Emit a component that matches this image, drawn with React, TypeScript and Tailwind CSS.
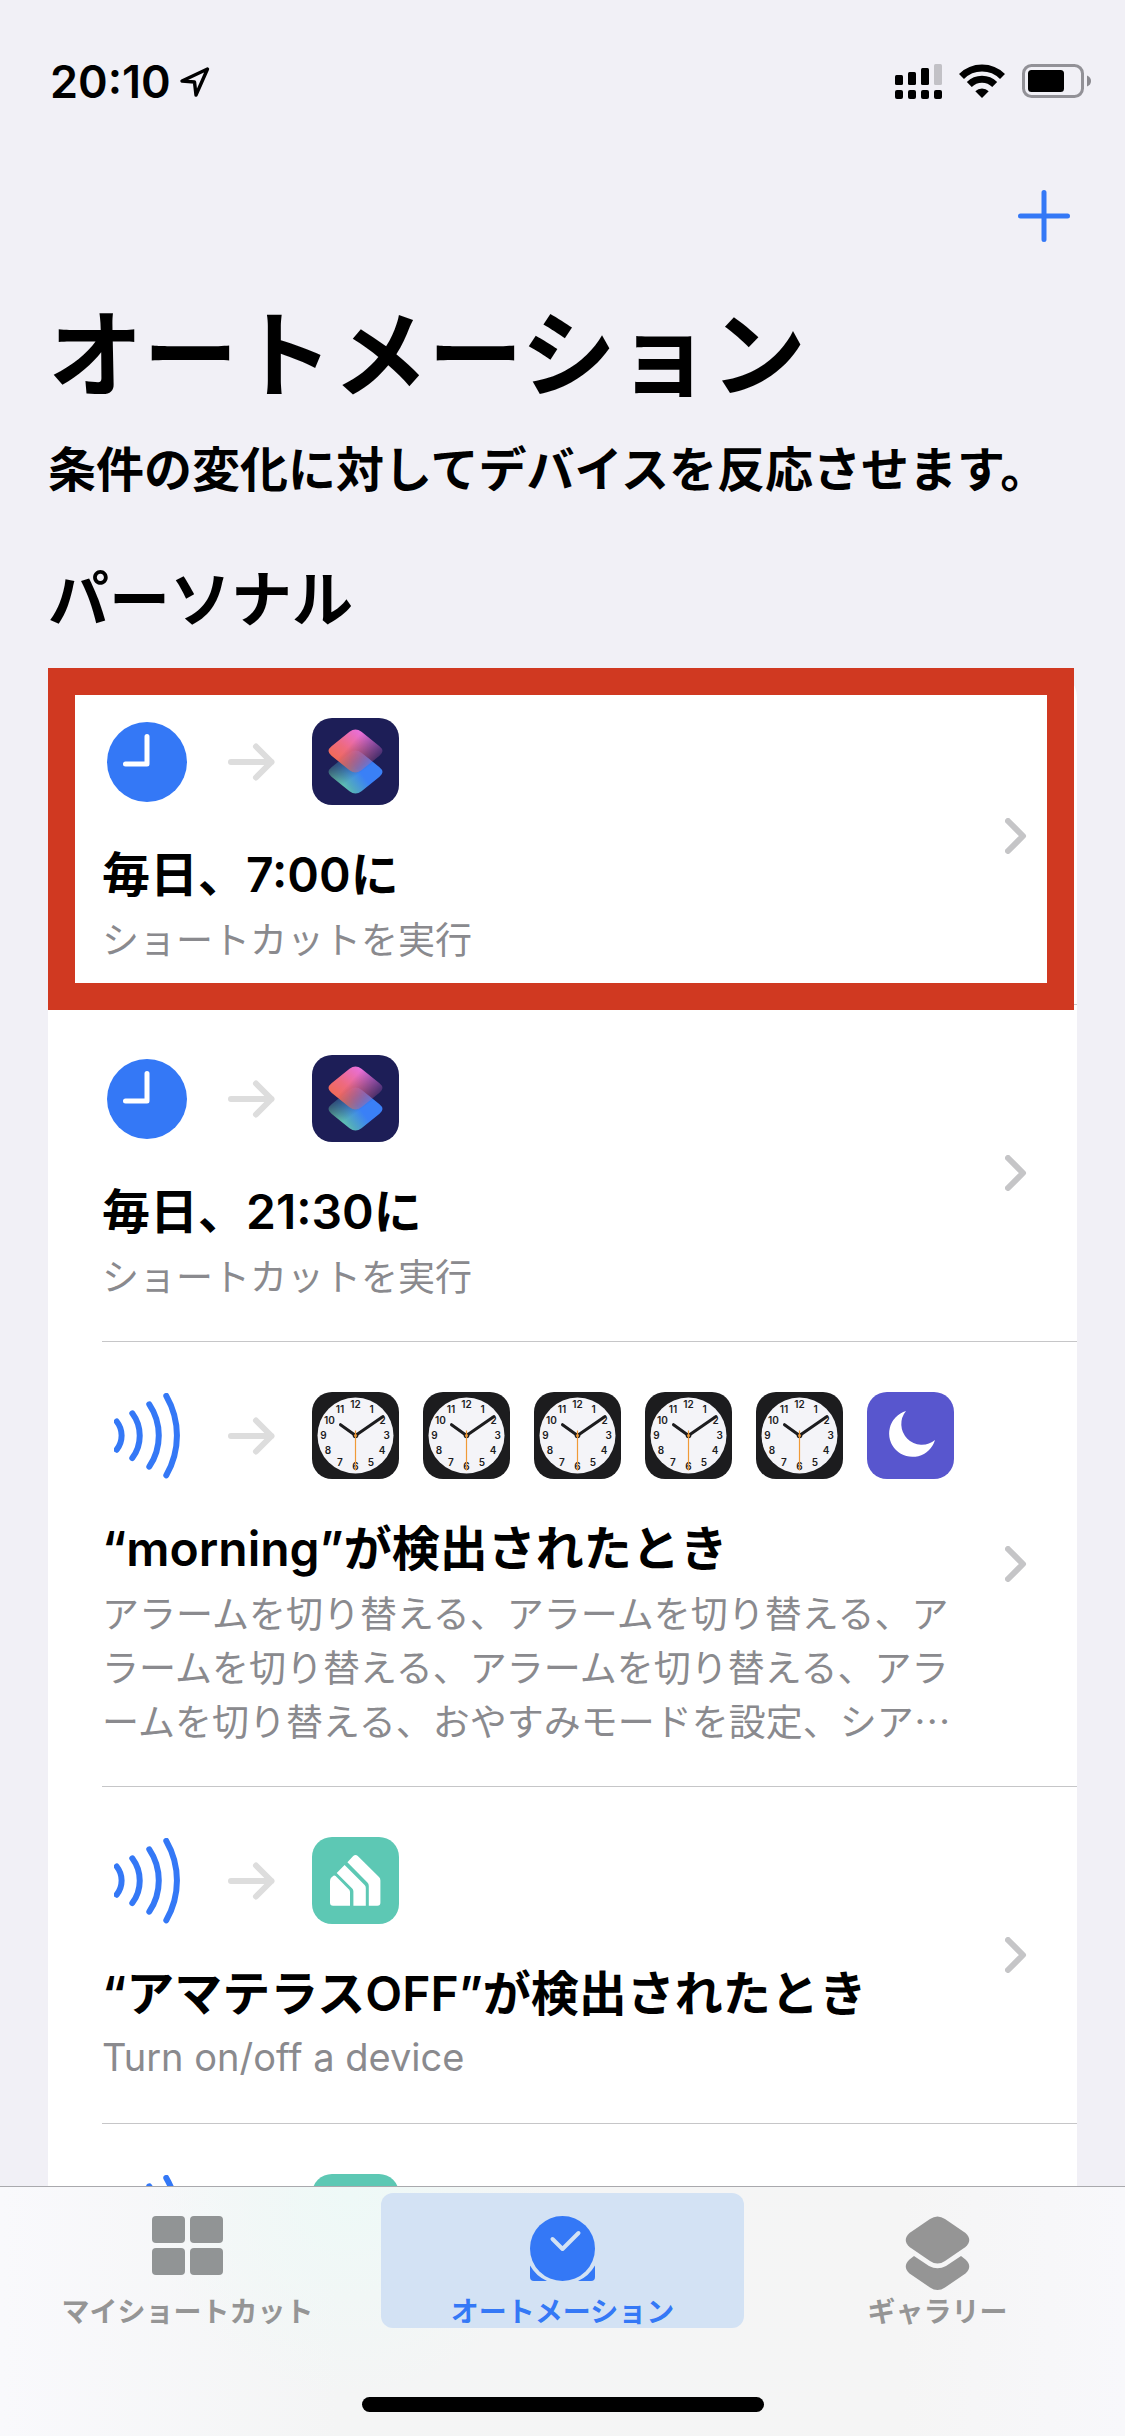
import type { ReactNode } from "react";

type Automation = {
  trigger: "time" | "nfc";
  actions: ActionName[];
  title?: string;
  detail?: string;
  detailLang?: "en";
  highlighted?: boolean;
};

type ActionName = "shortcuts" | "clock" | "moon" | "home";

const automations: Automation[] = [
  {
    trigger: "time",
    actions: ["shortcuts"],
    title: "毎日、7:00に",
    detail: "ショートカットを実行",
    highlighted: true,
  },
  {
    trigger: "time",
    actions: ["shortcuts"],
    title: "毎日、21:30に",
    detail: "ショートカットを実行",
  },
  {
    trigger: "nfc",
    actions: ["clock", "clock", "clock", "clock", "clock", "moon"],
    title: "“morning”が検出されたとき",
    detail:
      "アラームを切り替える、アラームを切り替える、アラームを切り替える、アラームを切り替える、アラームを切り替える、おやすみモードを設定、シア…",
  },
  {
    trigger: "nfc",
    actions: ["home"],
    title: "“アマテラスOFF”が検出されたとき",
    detail: "Turn on/off a device",
    detailLang: "en",
  },
  { trigger: "nfc", actions: ["home"] },
];

function LocationIcon() {
  return (
    <svg width="32" height="32" viewBox="0 0 32 32" fill="none" stroke="black" strokeWidth="3.4" strokeLinejoin="round">
      <path d="M28.5 3 L3 15 L15.5 16 L17 29 Z" />
    </svg>
  );
}

function SignalIcon() {
  return (
    <svg width="47" height="36" viewBox="0 0 47 36">
      <rect x="0" y="11" width="8" height="10" rx="1.5" />
      <rect x="13" y="8" width="8" height="13" rx="1.5" />
      <rect x="26" y="4" width="8" height="17" rx="1.5" />
      <rect x="39" y="0" width="8" height="21" rx="1.5" fill="#c2c1c6" />
      {[0, 13, 26, 39].map((x) => (
        <rect key={x} x={x} y="26" width="8" height="9" rx="2" />
      ))}
    </svg>
  );
}

function WifiIcon() {
  return (
    <svg width="46" height="36" viewBox="0 0 46 36" fill="none" stroke="black" strokeWidth="7">
      <path d="M2.5 12.5 A29 29 0 0 1 43.5 12.5" />
      <path d="M10.3 20.5 A18 18 0 0 1 35.7 20.5" />
      <path d="M23 34 L16.3 27.2 A9.5 9.5 0 0 1 29.7 27.2 Z" fill="black" stroke="none" />
    </svg>
  );
}

function BatteryIcon() {
  return (
    <svg width="70" height="36" viewBox="0 0 70 36">
      <rect x="1.5" y="1.5" width="59" height="31" rx="8" fill="none" stroke="#929197" strokeWidth="3" />
      <rect x="6" y="6" width="36" height="22" rx="3.5" />
      <path d="M65 11.5 Q69 13 69 17 Q69 21 65 22.5 Z" fill="#8a898f" />
    </svg>
  );
}

function TimeIcon() {
  return (
    <svg width="80" height="80" viewBox="0 0 80 80">
      <circle cx="40" cy="40" r="40" fill="#3478f6" />
      <path d="M40 14.5 V42 H18.5" fill="none" stroke="white" strokeWidth="5" strokeLinecap="round" strokeLinejoin="round" />
    </svg>
  );
}

function NfcIcon() {
  return (
    <svg width="66" height="86" viewBox="0 0 66 86" fill="none" stroke="#3478f6" strokeWidth="6" strokeLinecap="round">
      <path d="M2.7 28.5 A22.7 22.7 0 0 1 2.7 56.7" />
      <path d="M18.3 20.3 A37.3 37.3 0 0 1 18.3 65" />
      <path d="M35.3 11.3 A56 56 0 0 1 35.3 73.7" />
      <path d="M52.3 2.9 A79.4 79.4 0 0 1 52.3 82.3" />
    </svg>
  );
}

function ArrowIcon() {
  return (
    <svg width="48" height="38" viewBox="0 0 48 38" fill="none" stroke="#dddddd" strokeWidth="6" strokeLinecap="round" strokeLinejoin="round">
      <path d="M3 19 H43.5 M28 3.5 L43.5 19 L28 34.5" />
    </svg>
  );
}

function Chevron() {
  return (
    <svg className="shrink-0" width="22" height="36" viewBox="0 0 22 36" fill="none" stroke="#c5c5c7" strokeWidth="6" strokeLinecap="round" strokeLinejoin="round">
      <path d="M3 3 L18 18 L3 33" />
    </svg>
  );
}

const diamond =
  "M49.5 13.8 L67.5 28.2 Q73.5 33 67.5 37.8 L49.5 52.2 Q43.5 57 37.5 52.2 L19.5 37.8 Q13.5 33 19.5 28.2 L37.5 13.8 Q43.5 9 49.5 13.8 Z";

function ShortcutsTile() {
  return (
    <svg width="87" height="87" viewBox="0 0 87 87">
      <defs>
        <linearGradient id="sc-top" gradientUnits="userSpaceOnUse" x1="24" y1="42" x2="48" y2="14">
          <stop offset="0" stopColor="#f06a58" />
          <stop offset="0.4" stopColor="#ee6a7e" />
          <stop offset="1" stopColor="#e86fd8" />
        </linearGradient>
        <linearGradient id="sc-bottom" gradientUnits="userSpaceOnUse" x1="37" y1="72" x2="63" y2="53">
          <stop offset="0" stopColor="#75e09c" />
          <stop offset="0.5" stopColor="#52aabf" />
          <stop offset="1" stopColor="#3a80f7" />
        </linearGradient>
        <linearGradient id="sc-fade-top" gradientUnits="userSpaceOnUse" x1="40" y1="25" x2="62" y2="45">
          <stop offset="0" stopColor="white" />
          <stop offset="1" stopColor="white" stopOpacity="0.2" />
        </linearGradient>
        <linearGradient id="sc-fade-bottom" gradientUnits="userSpaceOnUse" x1="38" y1="62" x2="24" y2="42">
          <stop offset="0" stopColor="white" />
          <stop offset="1" stopColor="white" stopOpacity="0.25" />
        </linearGradient>
        <mask id="sc-mask-top">
          <rect width="87" height="87" fill="url(#sc-fade-top)" />
        </mask>
        <mask id="sc-mask-bottom">
          <rect width="87" height="87" fill="url(#sc-fade-bottom)" />
        </mask>
      </defs>
      <rect width="87" height="87" rx="20" fill="#1d1e57" />
      <g mask="url(#sc-mask-bottom)">
        <path d={diamond} transform="translate(0 21)" fill="url(#sc-bottom)" />
      </g>
      <g mask="url(#sc-mask-top)">
        <path d={diamond} fill="url(#sc-top)" />
      </g>
    </svg>
  );
}

// hour numerals run clockwise from 12
const numerals: [string, number, number][] = [
  ["12", 43.5, 12.5],
  ["1", 59.5, 17.5],
  ["2", 70.5, 28.5],
  ["3", 74.8, 43.5],
  ["4", 70, 58.5],
  ["5", 59, 70],
  ["6", 43.5, 74.5],
  ["7", 28, 70],
  ["8", 16, 58.5],
  ["9", 11.5, 43.5],
  ["10", 17.5, 28.5],
  ["11", 28, 17.5],
];

function ClockTile() {
  return (
    <svg width="87" height="87" viewBox="0 0 87 87">
      <rect width="87" height="87" rx="20" fill="#1c1c1e" />
      <circle cx="43.5" cy="43.5" r="38" fill="#f4f4f8" />
      <g className="font-['Inter',sans-serif]" fontSize="10" fontWeight="600" fill="#1c1c1e" textAnchor="middle">
        {numerals.map(([label, x, y]) => (
          <text key={label} x={x} y={y + 3.5}>
            {label}
          </text>
        ))}
      </g>
      <g stroke="#1c1c1e" strokeLinecap="round">
        <path d="M43.5 43.5 L28.5 32.7" strokeWidth="3" />
        <path d="M43.5 43.5 L71 24.5" strokeWidth="3" />
      </g>
      <circle cx="43.5" cy="43.5" r="2.8" fill="#1c1c1e" />
      <path d="M43.5 38.5 V78.5" stroke="#f09a37" strokeWidth="1.2" />
      <circle cx="43.5" cy="43.5" r="1.5" fill="#f09a37" />
    </svg>
  );
}

function MoonTile() {
  return (
    <svg width="87" height="87" viewBox="0 0 87 87">
      <rect width="87" height="87" rx="20" fill="#5856ce" />
      <path d="M39 19 A23.4 23.4 0 1 0 68 48 A20.6 20.6 0 0 1 39 19 Z" fill="white" />
    </svg>
  );
}

function HomeTile() {
  return (
    <svg width="87" height="87" viewBox="0 0 87 87">
      <rect width="87" height="87" rx="20" fill="#5dc8b4" />
      <g fill="white">
        <path d="M18 44 Q18 42 19.4 40.6 L21.4 38.8 Q22.6 38 23.6 39 L37 52.4 Q38 53.5 38 55 V68.7 H21 Q18 68.7 18 65.7 Z" />
        <path d="M24.7 36 L32.6 28 L52.6 48 Q53.8 49.2 53.8 51 V68.7 H41.4 V54.5 Q41.4 52.8 40.2 51.6 Z" />
        <path d="M35.4 25.2 L41.2 19 Q43.5 17 45.8 19 L67 40 Q68.4 41.4 68.4 43.5 V65.7 Q68.4 68.7 65.4 68.7 H56.8 V49 Q56.8 47 55.4 45.6 Z" />
      </g>
    </svg>
  );
}

const tiles: Record<ActionName, () => ReactNode> = {
  shortcuts: ShortcutsTile,
  clock: ClockTile,
  moon: MoonTile,
  home: HomeTile,
};

function AutomationRow({ item, last }: { item: Automation; last: boolean }) {
  return (
    <li className="relative">
      <button type="button" className="flex w-full pl-[54px] text-left">
        <div className={`flex min-w-0 flex-1 items-center justify-between pr-[50px] ${last ? "" : "border-b border-[#c6c6c8]"}`}>
          <div className="min-w-0 flex-1 pt-[50px] pb-[39px]">
            <div className="flex items-center gap-9">
              <span className="flex w-[90px] justify-center">{item.trigger === "time" ? <TimeIcon /> : <NfcIcon />}</span>
              <ArrowIcon />
              <span className="flex gap-6">
                {item.actions.map((name, i) => {
                  const Tile = tiles[name];
                  return <Tile key={i} />;
                })}
              </span>
            </div>
            {item.title && <div className="mt-9 text-[48px] leading-[68px] font-semibold text-black">{item.title}</div>}
            {item.detail && (
              <div
                lang={item.detailLang}
                className={`mt-[2px] mr-12 leading-[54px] text-[#8a8a8e] ${
                  item.detailLang === "en"
                    ? "text-[38px]"
                    : "font-['Noto_Sans_CJK_JP',sans-serif] text-[37px] [line-break:anywhere]"
                }`}
              >
                {item.detail}
              </div>
            )}
          </div>
          {item.title && <Chevron />}
        </div>
      </button>
      {item.highlighted && <div className="pointer-events-none absolute top-0 right-[3px] -bottom-[5px] left-0 border-[27px] border-[#d03921]" />}
    </li>
  );
}

function Tab({ label, active, children }: { label: string; active?: boolean; children: ReactNode }) {
  return (
    <li className="flex-1 px-[6px]">
      <a
        href="#"
        aria-current={active ? "page" : undefined}
        className={`flex flex-col items-center rounded-xl pt-[23px] text-[28px] leading-[32px] font-bold ${
          active ? "bg-[#d3e2f4] text-[#3478f6]" : "text-[#959595]"
        }`}
      >
        <span className="flex h-20 items-start">{children}</span>
        {label}
      </a>
    </li>
  );
}

export default function App() {
  return (
    <div lang="ja" className="flex h-screen flex-col bg-[#f1f0f6] font-['Inter','Noto_Sans_CJK_JP',sans-serif] text-black">
      <header className="flex h-[106px] shrink-0 items-end justify-between pr-[33px] pl-[50px]">
        <div className="flex h-12 items-center gap-2 text-[45px] font-semibold">
          <span>20:10</span>
          <LocationIcon />
        </div>
        <div className="flex h-12 items-center gap-[17px]">
          <SignalIcon />
          <WifiIcon />
          <BatteryIcon />
        </div>
      </header>

      <main className="min-h-0 flex-1 overflow-y-auto px-12 [scrollbar-width:none]">
        <div className="flex justify-end pt-[84px] pr-[7px]">
          <button type="button" aria-label="追加">
            <svg width="52" height="52" viewBox="0 0 52 52" stroke="#3478f6" strokeWidth="5" strokeLinecap="round">
              <path d="M26 2.5 V49.5 M2.5 26 H49.5" />
            </svg>
          </button>
        </div>
        <h1 className="mt-[54px] text-[95px] leading-[120px] font-bold">オートメーション</h1>
        <p className="mt-[22px] text-[48px] leading-[64px] font-semibold">条件の変化に対してデバイスを反応させます。</p>
        <h2 className="mt-[58px] text-[61px] leading-[80px] font-bold">パーソナル</h2>
        <ul className="mt-7 rounded-t-[30px] bg-white">
          {automations.map((item, i) => (
            <AutomationRow key={i} item={item} last={i === automations.length - 1} />
          ))}
        </ul>
      </main>

      <nav className="shrink-0 border-t border-[#a9a9ad] bg-[#f5f5f5] bg-[radial-gradient(circle_at_350px_10px,#eef9f7_0,transparent_200px),linear-gradient(to_right,#f9f9fc,#f4f5f5_30%,#f5f5f5_80%,#f8f8fb)] pt-[6px]">
        <ul className="flex">
          <Tab label="マイショートカット">
            <svg width="71" height="59" viewBox="0 0 71 59" fill="#919495">
              <rect width="33" height="27" rx="4" />
              <rect x="38" width="33" height="27" rx="4" />
              <rect y="32" width="33" height="27" rx="4" />
              <rect x="38" y="32" width="33" height="27" rx="4" />
            </svg>
          </Tab>
          <Tab label="オートメーション" active>
            <svg width="65" height="65" viewBox="0 0 65 65" fill="#3478f6">
              <circle cx="32.5" cy="32.5" r="32.5" />
              <path d="M0 49.5 A36.5 36.5 0 0 0 17 65 L4 65 Q0 65 0 61 Z" />
              <path d="M65 49.5 A36.5 36.5 0 0 1 48 65 L61 65 Q65 65 65 61 Z" />
              <path d="M22.5 23 L32.5 33 L48.5 17" fill="none" stroke="#d3e2f4" strokeWidth="4" strokeLinecap="round" strokeLinejoin="round" />
            </svg>
          </Tab>
          <Tab label="ギャラリー">
            <svg width="65" height="75" viewBox="0 0 65 75" fill="#959595">
              <path d="M25 3 Q32.5 -2 40 3 L60.5 17 Q68 24 60.5 31 L40 45 Q32.5 50 25 45 L4.5 31 Q-3 24 4.5 17 Z" />
              <path d="M9 40 L24 50 Q32.5 54.5 41 50 L56 40 L60.5 43.5 Q68 50.5 60.5 57.5 L40 71.5 Q32.5 76.5 25 71.5 L4.5 57.5 Q-3 50.5 4.5 43.5 Z" />
            </svg>
          </Tab>
        </ul>
        <div className="mx-auto mt-[69px] mb-6 h-[15px] w-[402px] rounded-full bg-black" />
      </nav>
    </div>
  );
}
